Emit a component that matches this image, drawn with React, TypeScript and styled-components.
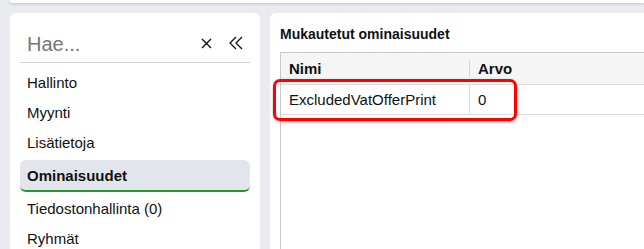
import styled, { createGlobalStyle } from "styled-components";

const GlobalStyle = createGlobalStyle`
  html, body {
    margin: 0;
    padding: 0;
    background: #eaebee;
    overflow: hidden;
  }
  body {
    font-family: "Liberation Sans", Arial, sans-serif;
    color: #111;
  }
`;

const Page = styled.div`
  width: 644px;
  height: 249px;
  padding: 0 0 0 10px;
  box-sizing: border-box;
  overflow: hidden;
`;
const TopBar = styled.div`
  height: 3px;
  background: #fff;
  border-radius: 0 0 0 6px;
  box-shadow: 0 1px 3px rgba(0, 0, 0, 0.18);
`;
const Columns = styled.div`
  display: flex;
  gap: 10px;
  margin-top: 10px;
  height: 236px;
  overflow: hidden;
`;
const SideCard = styled.div`
  width: 250px;
  flex: none;
  background: #fff;
  border-radius: 6px 6px 0 0;
  box-sizing: border-box;
  padding: 10px;
`;
const SearchRow = styled.div`
  display: flex;
  align-items: center;
  padding: 10px 7px 6px;
  border-bottom: 1px solid #d4d4d4;
  margin-bottom: 5px;
`;
const SearchInput = styled.div`
  flex: 1;
  font-size: 20px;
  line-height: 23px;
  color: #767676;
`;
const IconButton = styled.span`
  display: inline-flex;
  width: 14px;
  height: 14px;
  align-items: center;
  justify-content: center;
  margin-left: 16px;
  margin-top: -3px;
`;
const Item = styled.div<{ $active?: boolean }>`
  font-size: 15px;
  line-height: 18px;
  padding: ${(p) => (p.$active ? "7px 7px 5px" : "6px 7px")};
  margin: ${(p) => (p.$active ? "2px 0" : "0")};
  font-weight: ${(p) => (p.$active ? 700 : 400)};
  background: ${(p) => (p.$active ? "#e2e5ec" : "transparent")};
  border-bottom: ${(p) => (p.$active ? "2px solid #1f9a2a" : "none")};
  border-radius: ${(p) => (p.$active ? "6px" : "0")};
`;
const MainCard = styled.div`
  flex: 1;
  min-width: 0;
  background: #fff;
  border-radius: 6px 0 0 0;
  box-sizing: border-box;
  padding: 13px 0 0 10px;
`;
const Title = styled.div`
  font-size: 14px;
  line-height: 17px;
  font-weight: 700;
  margin-bottom: 9px;
`;
const Table = styled.div`
  border-top: 1px solid #c9c9c9;
  border-left: 1px solid #c9c9c9;
  height: 240px;
`;
const Row = styled.div<{ $head?: boolean }>`
  position: relative;
  display: grid;
  grid-template-columns: 189px 1fr;
  font-size: 15px;
  line-height: 18px;
  font-weight: ${(p) => (p.$head ? 700 : 400)};
  background: ${(p) => (p.$head ? "#f5f5f5" : "#fff")};
  border-bottom: 1px solid #dcdcdc;
`;
const Cell = styled.div<{ $head?: boolean; $divider?: boolean }>`
  position: relative;
  padding: ${(p) => (p.$head ? "7px 8px 6px" : "6px 8px 5px")};
  border-right: ${(p) => (p.$divider && !p.$head ? "1px solid #dcdcdc" : "none")};
  ${(p) =>
    p.$divider && p.$head
      ? `&::after { content: ""; position: absolute; right: 0; top: 7px; bottom: 7px; width: 1px; background: #d6d6d6; }`
      : ""}
`;
const Highlight = styled.div`
  position: absolute;
  left: -8px;
  top: -6px;
  width: 244px;
  height: 42px;
  box-sizing: border-box;
  border: 3px solid #ff0000;
  border-radius: 7px;
  box-shadow: 0 1px 3px rgba(0, 0, 0, 0.3);
  pointer-events: none;
`;

const menu = ["Hallinto", "Myynti", "Lisätietoja", "Ominaisuudet", "Tiedostonhallinta (0)", "Ryhmät"];

export default function App() {
  return (
    <Page>
      <GlobalStyle />
      <TopBar />
      <Columns>
        <SideCard>
          <SearchRow>
            <SearchInput>Hae...</SearchInput>
            <IconButton>
              <svg width="11" height="11" viewBox="0 0 11 11">
                <path d="M1 1L10 10M10 1L1 10" stroke="#111" strokeWidth="1.4" fill="none" />
              </svg>
            </IconButton>
            <IconButton>
              <svg width="14" height="14" viewBox="0 0 14 14">
                <path d="M7 1L1 7L7 13M13 1L7 7L13 13" stroke="#111" strokeWidth="1.3" fill="none" />
              </svg>
            </IconButton>
          </SearchRow>
          {menu.map((m) => (
            <Item key={m} $active={m === "Ominaisuudet"}>
              {m}
            </Item>
          ))}
        </SideCard>
        <MainCard>
          <Title>Mukautetut ominaisuudet</Title>
          <Table>
            <Row $head>
              <Cell $head $divider>Nimi</Cell>
              <Cell $head>Arvo</Cell>
            </Row>
            <Row>
              <Cell $divider>ExcludedVatOfferPrint</Cell>
              <Cell>0</Cell>
              <Highlight />
            </Row>
          </Table>
        </MainCard>
      </Columns>
    </Page>
  );
}
